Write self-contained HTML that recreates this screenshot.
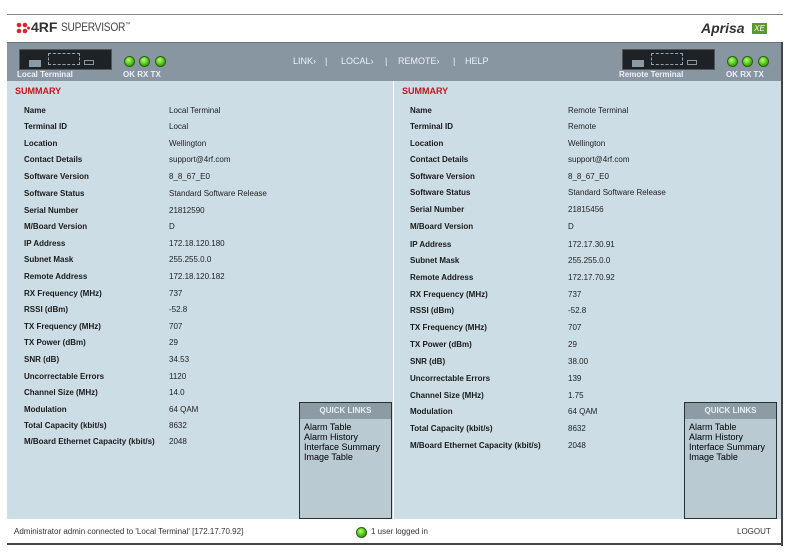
<!DOCTYPE html>
<html><head><meta charset="utf-8"><style>
*{margin:0;padding:0;box-sizing:border-box}
body{width:806px;height:552px;background:#fff;position:relative;overflow:hidden;font-family:"Liberation Sans",Arial,sans-serif;}
.a{position:absolute;white-space:nowrap}
.l{font-size:8px;font-weight:bold;color:#1a1a1a}
.v{font-size:8px;color:#222}
.led{position:absolute;width:11px;height:11px;border-radius:50%;background:radial-gradient(circle at 40% 35%,#b8ff70,#4cc018 55%,#2a7a0a);border:1px solid #2e5e10}
.dev{position:absolute;width:93px;height:21px;background:#1c2226;border:1px solid #555}
.dev i{position:absolute;display:block}
.ql{position:absolute;width:93px;height:117px;background:#b9cad3;border:1.5px solid #2a2f33}
.ql .h{height:16px;background:#8d9ba5;color:#e8eef2;font-size:8px;font-weight:bold;text-align:center;line-height:16px}
.ql .b{padding:3px 0 0 4px;font-size:9px;line-height:10px;color:#000}
.nav{position:absolute;top:56px;font-size:9px;color:#eef}
</style></head><body>
<div class="a" style="left:7px;top:14px;width:776px;height:1px;background:#888"></div>
<div class="a" style="left:16px;top:21px;width:14px;height:12px">
<svg width="14" height="12"><g fill="#d8262b"><circle cx="3" cy="3" r="2.3"/><circle cx="9" cy="3" r="2.3"/><circle cx="3" cy="9" r="2.3"/><circle cx="9" cy="9" r="2.3"/><circle cx="12.5" cy="6" r="1.5"/></g></svg></div>
<div class="a" style="left:31px;top:19px;font-size:14px;font-weight:bold;color:#333">4RF</div>
<div class="a" style="left:61px;top:20px;font-size:12px;color:#444;letter-spacing:-0.3px;transform:scaleX(0.85);transform-origin:left">SUPERVISOR<sup style="font-size:6px">™</sup></div>
<div class="a" style="left:701px;top:20px;font-size:14px;font-weight:bold;font-style:italic;color:#333">Aprisa</div>
<div class="a" style="left:752px;top:23px;width:15px;height:11px;background:#5a9a2c;color:#fff;font-size:8px;font-style:italic;text-align:center;line-height:11px">XE</div>

<div class="a" style="left:7px;top:42px;width:776px;height:39px;background:#8796a0;border-top:1px solid #6a7780"></div>
<div class="dev" style="left:19px;top:49px"><i style="left:9px;top:10px;width:12px;height:7px;background:#8a9aa6"></i><i style="left:28px;top:3px;width:32px;height:12px;border:1px dashed #9aa6ae"></i><i style="left:64px;top:10px;width:10px;height:5px;border:1px solid #8a969e"></i></div>
<div class="a" style="left:17px;top:70px;font-size:8px;font-weight:bold;color:#eef">Local Terminal</div>
<div class="led" style="left:124px;top:56px"></div><div class="led" style="left:139px;top:56px"></div><div class="led" style="left:155px;top:56px"></div>
<div class="a" style="left:123px;top:70px;font-size:8px;font-weight:bold;color:#eef">OK RX TX</div>
<div class="nav" style="left:293px">LINK›</div>
<div class="nav" style="left:325px">|</div>
<div class="nav" style="left:341px">LOCAL›</div>
<div class="nav" style="left:385px">|</div>
<div class="nav" style="left:398px">REMOTE›</div>
<div class="nav" style="left:453px">|</div>
<div class="nav" style="left:465px">HELP</div>
<div class="dev" style="left:622px;top:49px"><i style="left:9px;top:10px;width:12px;height:7px;background:#8a9aa6"></i><i style="left:28px;top:3px;width:32px;height:12px;border:1px dashed #9aa6ae"></i><i style="left:64px;top:10px;width:10px;height:5px;border:1px solid #8a969e"></i></div>
<div class="a" style="left:619px;top:70px;font-size:8px;font-weight:bold;color:#eef">Remote Terminal</div>
<div class="led" style="left:727px;top:56px"></div><div class="led" style="left:742px;top:56px"></div><div class="led" style="left:758px;top:56px"></div>
<div class="a" style="left:726px;top:70px;font-size:8px;font-weight:bold;color:#eef">OK RX TX</div>

<div class="a" style="left:7px;top:81px;width:386px;height:438px;background:#cddde6"></div>
<div class="a" style="left:393px;top:81px;width:1px;height:438px;background:#fff"></div>
<div class="a" style="left:394px;top:81px;width:388px;height:438px;background:#cddde6"></div>
<div class="a" style="left:781px;top:42px;width:2px;height:504px;background:#444"></div>
<div class="a" style="left:15px;top:86px;font-size:9px;font-weight:bold;color:#c8141e">SUMMARY</div>
<div class="a" style="left:402px;top:86px;font-size:9px;font-weight:bold;color:#c8141e">SUMMARY</div>

<div id="L"></div>
<script>
var labs=["Name","Terminal ID","Location","Contact Details","Software Version","Software Status","Serial Number","M/Board Version","IP Address","Subnet Mask","Remote Address","RX Frequency (MHz)","RSSI (dBm)","TX Frequency (MHz)","TX Power (dBm)","SNR (dB)","Uncorrectable Errors","Channel Size (MHz)","Modulation","Total Capacity (kbit/s)","M/Board Ethernet Capacity (kbit/s)"];
var lv=["Local Terminal","Local","Wellington","support@4rf.com","8_8_67_E0","Standard Software Release","21812590","D","172.18.120.180","255.255.0.0","172.18.120.182","737","-52.8","707","29","34.53","1120","14.0","64 QAM","8632","2048"];
var rv=["Remote Terminal","Remote","Wellington","support@4rf.com","8_8_67_E0","Standard Software Release","21815456","D","172.17.30.91","255.255.0.0","172.17.70.92","737","-52.8","707","29","38.00","139","1.75","64 QAM","8632","2048"];
var ly=[106,122,139,155,172,189,206,222,239,255,272,289,305,322,338,355,372,388,405,421,437];
var ry=[106,122,139,155,172,188,205,222,240,256,273,290,306,323,340,357,374,391,407,424,441];
var h="";
for(var i=0;i<21;i++){
h+='<div class="a l" style="left:24px;top:'+ly[i]+'px">'+labs[i]+'</div><div class="a v" style="left:169px;top:'+ly[i]+'px">'+lv[i]+'</div>';
h+='<div class="a l" style="left:410px;top:'+ry[i]+'px">'+labs[i]+'</div><div class="a v" style="left:568px;top:'+ry[i]+'px">'+rv[i]+'</div>';
}
document.getElementById("L").outerHTML=h;
</script>

<div class="ql" style="left:299px;top:402px"><div class="h">QUICK LINKS</div><div class="b">Alarm Table<br>Alarm History<br>Interface Summary<br>Image Table</div></div>
<div class="ql" style="left:684px;top:402px"><div class="h">QUICK LINKS</div><div class="b">Alarm Table<br>Alarm History<br>Interface Summary<br>Image Table</div></div>

<div class="a" style="left:7px;top:519px;width:774px;height:25px;background:#fff"></div>
<div class="a" style="left:14px;top:527px;font-size:8px;color:#333">Administrator admin connected to 'Local Terminal' [172.17.70.92]</div>
<div class="led" style="left:356px;top:527px"></div>
<div class="a" style="left:371px;top:527px;font-size:8px;color:#333">1 user logged in</div>
<div class="a" style="left:737px;top:527px;font-size:8px;color:#333">LOGOUT</div>
<div class="a" style="left:7px;top:543px;width:776px;height:2px;background:#444"></div>
</body></html>
